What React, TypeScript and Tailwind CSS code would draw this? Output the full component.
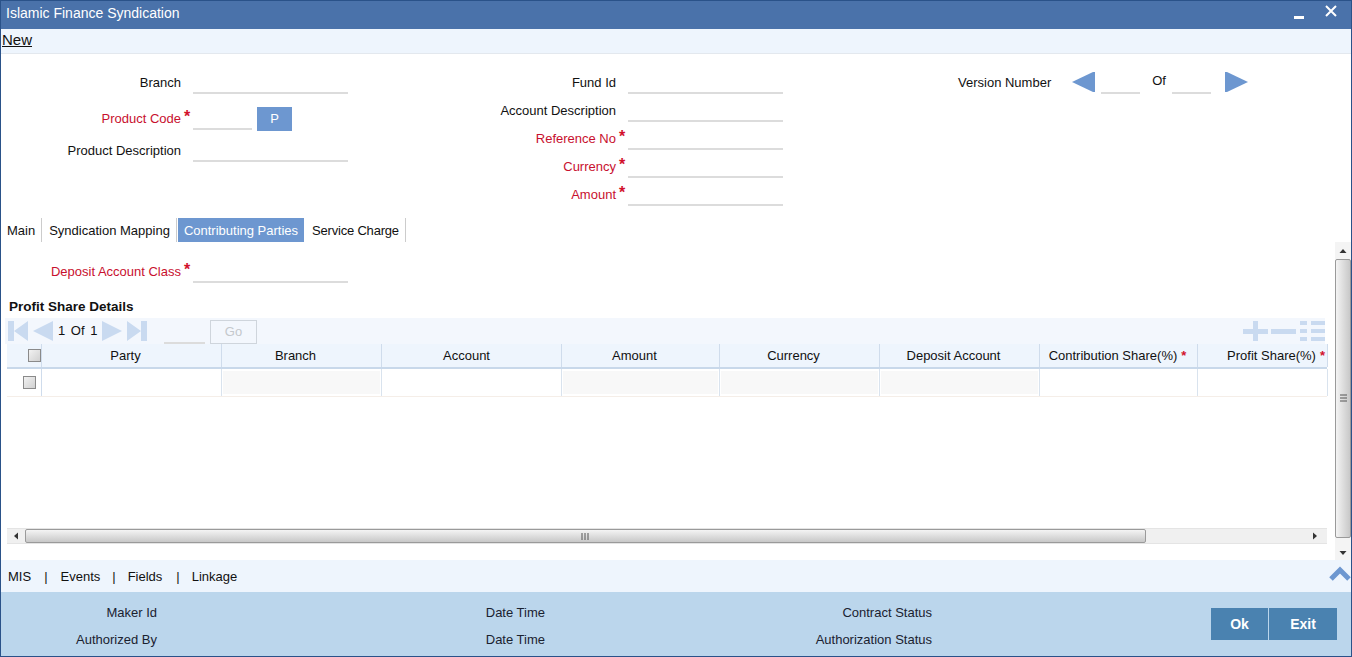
import React from "react";

const Star = () => <span className="w-[12px] shrink-0 pl-[3px] pb-[3px] text-[16px] font-bold leading-[20px] text-[#d2112c]">*</span>;

function Field({ label, req, w = 155, labelW = 180, className = "" }: { label: string; req?: boolean; w?: number; labelW?: number; className?: string }) {
  return (
    <div className={`flex h-[28px] items-end ${className}`}>
      <div style={{ width: labelW }} className={`pb-[1px] text-right leading-[20px] ${req ? "text-[#c8102e]" : "text-[#111]"}`}>{label}</div>
      {req ? <Star /> : <span className="w-[12px] shrink-0" />}
      <div style={{ width: w }} className="h-[2px] bg-[#dcdcdc]" />
    </div>
  );
}

const Arrow = ({ dir, className = "" }: { dir: "l" | "r"; className?: string }) => (
  <svg width="23" height="20" viewBox="0 0 23 20" className={className}>
    <path d={dir === "l" ? "M23 0V20H21L0 10L21 0Z" : "M0 0V20H2L23 10L2 0Z"} fill="#6d97d0" />
  </svg>
);

const NavIcon = ({ kind }: { kind: "first" | "prev" | "next" | "last" }) => {
  const d = {
    first: "M0 0H6V20H0ZM6 10L20 0V20Z",
    prev: "M0 10L20 0V20Z",
    next: "M0 0L20 10L0 20Z",
    last: "M0 0L14 10L0 20ZM14 0H20V20H14Z",
  }[kind];
  return (
    <svg width="20" height="20" viewBox="0 0 20 20" className="shrink-0">
      <path d={d} fill="#c9daf0" />
    </svg>
  );
};

const columns = [
  { label: "Party", w: 180, fill: false, head: "justify-center pr-[12px]" },
  { label: "Branch", w: 160, fill: true, head: "justify-center pr-[12px]" },
  { label: "Account", w: 180, fill: false, head: "justify-center pr-[10px]" },
  { label: "Amount", w: 158, fill: true, head: "justify-center pr-[12px]" },
  { label: "Currency", w: 160, fill: true, head: "justify-center pr-[12px]" },
  { label: "Deposit Account", w: 160, fill: true, head: "justify-center pr-[12px]" },
  { label: "Contribution Share(%)", w: 158, fill: false, req: true, head: "justify-center pr-[2px]" },
  { label: "Profit Share(%)", w: 130, fill: false, req: true, head: "justify-end pr-[2px]" },
];

const Check = () => <span className="block h-[13px] w-[13px] border border-[#8a8a8a] bg-gradient-to-br from-[#f2f2f2] to-[#d0d0d0]" />;

export default function App() {
  return (
    <div className="flex h-[657px] w-[1352px] flex-col overflow-hidden border border-[#2a5289] bg-white text-[13px] text-[#111] [font-family:'Liberation_Sans',Arial,sans-serif]">
      {/* Title bar */}
      <div className="flex h-[28px] shrink-0 items-center justify-between bg-[#4a72aa] pb-[3px] pl-[5px] pr-[14px] text-white">
        <span className="text-[14px]">Islamic Finance Syndication</span>
        <div className="flex items-center gap-[21px]">
          <span className="mt-[8px] h-[3px] w-[10px] bg-white" />
          <svg width="12" height="12" viewBox="0 0 12 12" className="mb-[6px]"><path d="M1 1L11 11M11 1L1 11" stroke="#fff" strokeWidth="2" /></svg>
        </div>
      </div>

      {/* Action bar */}
      <div className="flex h-[25px] shrink-0 items-center border-b border-[#e3e8ee] bg-[#eef5fd] pb-[1px] pl-[1px]">
        <span className="text-[15px] underline">New</span>
      </div>

      {/* Header form */}
      <div className="flex h-[164px] shrink-0 pt-[12px]">
        <div className="w-[347px] shrink-0">
          <Field label="Branch" />
          <div className="mt-[8px] flex items-end">
            <Field label="Product Code" req w={59} />
            <button className="mb-[-1px] ml-[5px] h-[24px] w-[35px] bg-[#6d97d0] text-[13px] text-white">P</button>
          </div>
          <Field label="Product Description" className="mt-[4px]" />
        </div>
        <div className="ml-[88px] w-[347px] shrink-0">
          <Field label="Fund Id" />
          <Field label="Account Description" />
          <Field label="Reference No" req />
          <Field label="Currency" req />
          <Field label="Amount" req />
        </div>
        <div className="ml-[175px] flex h-[28px] items-end">
          <div className="pb-[1px] leading-[20px]">Version Number</div>
          <Arrow dir="l" className="mb-[2px] ml-[21px]" />
          <div className="ml-[6px] h-[2px] w-[39px] bg-[#dcdcdc]" />
          <div className="ml-[12px] pb-[3px] leading-[20px]">Of</div>
          <div className="ml-[6px] h-[2px] w-[39px] bg-[#dcdcdc]" />
          <Arrow dir="r" className="mb-[2px] ml-[14px]" />
        </div>
      </div>

      {/* Tabs */}
      <div className="flex h-[24px] shrink-0 pl-[6px] leading-[25px]">
        <div className="border-r border-[#ccc] pr-[6px]">Main</div>
        <div className="border-r border-[#ccc] pl-[7px] pr-[6px]">Syndication Mapping</div>
        <div className="ml-[1px] bg-[#6d97d0] px-[6px] text-white">Contributing Parties</div>
        <div className="ml-[1px] border-r border-[#ccc] pl-[7px] pr-[6px] tracking-[-0.2px]">Service Charge</div>
      </div>

      {/* Tab body */}
      <div className="flex h-[318px] shrink-0">
        <div className="flex w-[1334px] shrink-0 flex-col">
          <Field label="Deposit Account Class" req className="mt-[13px]" />
          <div className="ml-[8px] mt-[14px] h-[20px] text-[13.5px] font-bold leading-[20px]">Profit Share Details</div>

          {/* Grid toolbar */}
          <div className="ml-[4px] mt-[1px] flex h-[26px] w-[1320px] shrink-0 items-center bg-[#f3f7fd] pl-[3px]">
            <NavIcon kind="first" />
            <span className="ml-[5px]"><NavIcon kind="prev" /></span>
            <span className="ml-[5px] w-[44px] shrink-0 whitespace-nowrap text-[13px] [word-spacing:2px]">1&nbsp;Of&nbsp;1</span>
            <NavIcon kind="next" />
            <span className="ml-[5px]"><NavIcon kind="last" /></span>
            <div className="ml-[17px] mt-[24px] h-[2px] w-[41px] bg-[#dcdcdc]" />
            <button className="ml-[5px] mt-[2px] h-[24px] w-[47px] border border-[#cfd5dc] bg-[#f3f7fd] text-[13px] text-[#c4c8cc]">Go</button>
            <svg width="82" height="20" viewBox="0 0 82 20" className="ml-auto" fill="#c9daf0">
              <path d="M10 0H15V8H25V13H15V20H10V13H0V8H10Z" />
              <path d="M28 8H53V13H28Z" />
              <path d="M57 0H64V4H57ZM68 0H82V4H68ZM57 8H64V12H57ZM68 8H82V12H68ZM57 16H64V20H57ZM68 16H82V20H68Z" />
            </svg>
          </div>

          {/* Grid */}
          <div className="ml-[6px] flex h-[200px] w-[1320px] shrink-0 flex-col">
            <div className="flex h-[25px] shrink-0 border-b-2 border-[#c8d8ea] bg-[#eef5fd]">
              <div className="flex w-[35px] shrink-0 items-center justify-end border-r border-[#cfdcec]"><Check /></div>
              {columns.map((c) => (
                <div key={c.label} style={{ width: c.w }} className={`flex shrink-0 items-center whitespace-nowrap border-r border-[#cfdcec] ${c.head}`}>
                  {c.label}
                  {c.req && <span className="ml-[4px] font-bold text-[#d2112c]">*</span>}
                </div>
              ))}
            </div>
            <div className="flex h-[28px] shrink-0 border-b border-[#f5eee8]">
              <div className="flex w-[35px] shrink-0 items-center justify-end border-r border-[#cfdcec] pr-[5px]"><Check /></div>
              {columns.map((c) => (
                <div key={c.label} style={{ width: c.w }} className="flex shrink-0 items-center border-r border-[#d9e3ee] px-[1px]">
                  {c.fill && <div className="h-[23px] w-full bg-[#f8f8f8]" />}
                </div>
              ))}
            </div>
            <div className="flex-1" />
            {/* Horizontal scrollbar */}
            <div className="flex h-[16px] shrink-0 items-center border-y border-[#e4e4e4] bg-[#f0f0f0]">
              <svg width="18" height="14" viewBox="0 0 18 14" className="shrink-0"><path d="M7 7L11 3.5V10.5Z" fill="#333" /></svg>
              <div className="flex h-[14px] w-[1121px] shrink-0 items-center justify-center rounded-[2px] border border-[#9a9a9a] bg-gradient-to-b from-[#f4f4f4] to-[#c8c8c8]">
                <svg width="9" height="7" viewBox="0 0 9 7"><path d="M1 0V7M4 0V7M7 0V7" stroke="#555" /></svg>
              </div>
              <svg width="14" height="14" viewBox="0 0 14 14" className="ml-auto mr-[6px] shrink-0"><path d="M10 7L6 3.5V10.5Z" fill="#333" /></svg>
            </div>
          </div>
        </div>

        {/* Vertical scrollbar */}
        <div className="flex w-[16px] shrink-0 flex-col items-center bg-[#f4f4f4]">
          <svg width="14" height="17" viewBox="0 0 14 17" className="shrink-0"><path d="M7 7L10.5 11H3.5Z" fill="#333" /></svg>
          <div className="flex h-[279px] w-[16px] shrink-0 items-center justify-center rounded-[2px] border border-[#9a9a9a] bg-gradient-to-r from-[#f4f4f4] to-[#c8c8c8]">
            <svg width="7" height="9" viewBox="0 0 7 9"><path d="M0 1H7M0 4H7M0 7H7" stroke="#555" /></svg>
          </div>
          <svg width="14" height="17" viewBox="0 0 14 17" className="mt-auto shrink-0"><path d="M7 12L10.5 8H3.5Z" fill="#333" /></svg>
        </div>
      </div>

      {/* Sub-screen links */}
      <div className="flex h-[32px] shrink-0 items-center bg-[#eef5fd] pl-[7px] pt-[2px]">
        <span>MIS</span><span className="ml-[13px]">|</span>
        <span className="ml-[13px]">Events</span><span className="ml-[12px]">|</span>
        <span className="ml-[12px]">Fields</span><span className="ml-[14px]">|</span>
        <span className="ml-[12px]">Linkage</span>
        <svg width="22" height="15" viewBox="0 0 22 15" className="mb-[7px] ml-auto"><path d="M2 13L11 4L20 13" fill="none" stroke="#6d97d0" strokeWidth="5" /></svg>
      </div>

      {/* Audit footer */}
      <div className="flex flex-1 bg-[#bbd6ec] pt-[7px] text-[#1a2230]">
        <div className="w-[156px] shrink-0 text-right leading-[27px]"><div>Maker Id</div><div>Authorized By</div></div>
        <div className="w-[388px] shrink-0 text-right leading-[27px]"><div>Date Time</div><div>Date Time</div></div>
        <div className="w-[387px] shrink-0 text-right leading-[27px]"><div>Contract Status</div><div>Authorization Status</div></div>
        <div className="ml-auto mr-[14px] mt-[9px] flex h-[32px] text-white">
          <button className="h-[32px] w-[57px] bg-[#4a82b0] text-[14px] font-bold">Ok</button>
          <button className="ml-[1px] h-[32px] w-[68px] bg-[#4a82b0] text-[14px] font-bold">Exit</button>
        </div>
      </div>
    </div>
  );
}
